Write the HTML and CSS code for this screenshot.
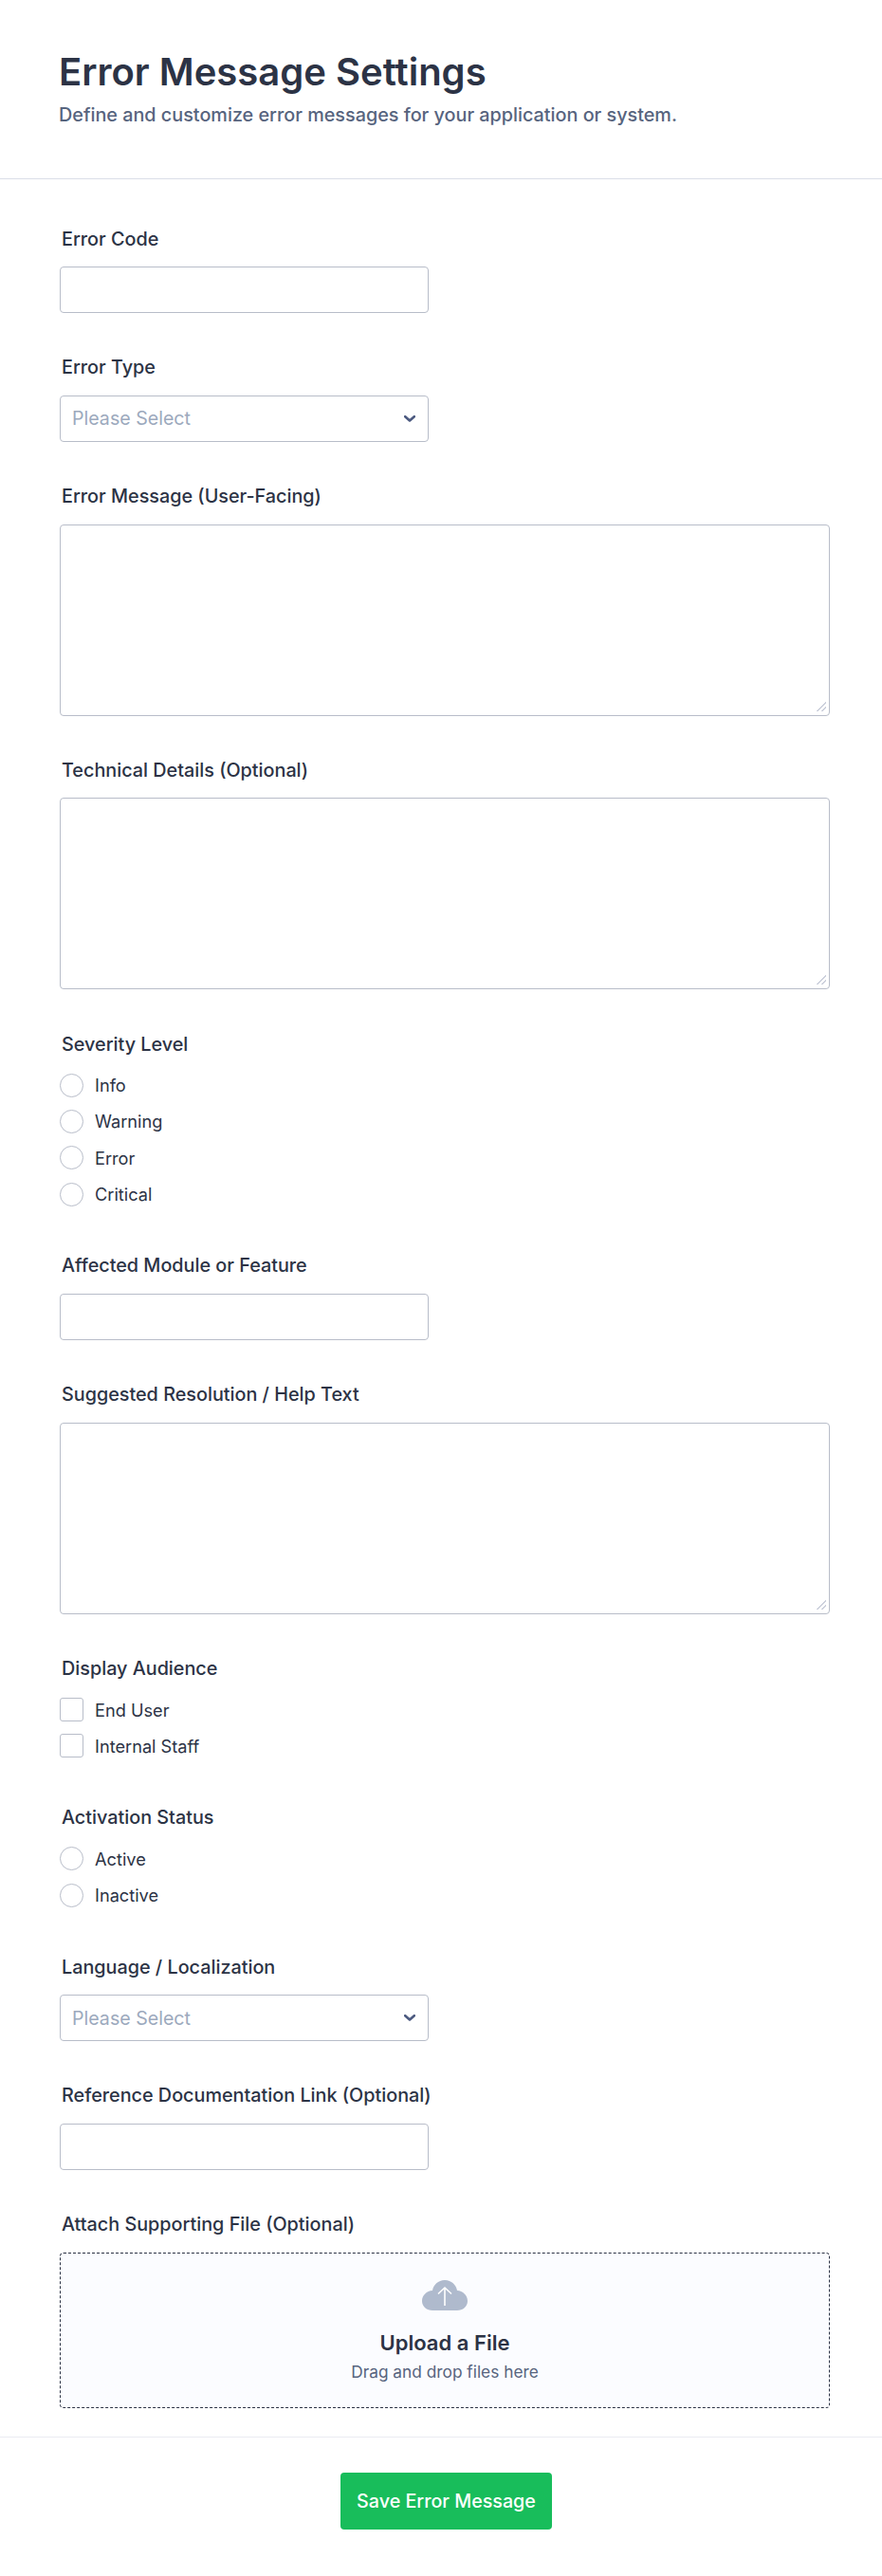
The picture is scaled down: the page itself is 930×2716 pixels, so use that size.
FILE: index.html
```html
<!DOCTYPE html>
<html lang="en">
<head>
	<meta charset="utf-8">
	<meta name="viewport" content="width=device-width">
	<title>Error Message Settings</title>
	<link rel="stylesheet" href="styles.css">
</head>
<body>
	<header class="head">
		<h1>Error Message Settings</h1>
		<p>Define and customize error messages for your application or system.</p>
	</header>
	<form class="form">
		<div class="field">
			<label>Error Code</label>
			<input type="text" class="short">
		</div>
		<div class="field">
			<label>Error Type</label>
			<div class="select-wrap short">
				<select>
					<option>Please Select</option>
				</select>
				<svg class="chevron" viewBox="0 0 12 7"><path d="M1.200 1.200l4.800 4.300 4.800-4.300" fill="none" stroke="#4c5a80" stroke-width="2.600" stroke-linecap="round" stroke-linejoin="round"/></svg>
			</div>
		</div>
		<div class="field">
			<label>Error Message (User-Facing)</label>
			<textarea></textarea>
		</div>
		<div class="field">
			<label>Technical Details (Optional)</label>
			<textarea></textarea>
		</div>
		<div class="field">
			<label>Severity Level</label>
			<div class="options">
				<div class="option"><span class="radio"></span>Info</div>
				<div class="option"><span class="radio"></span>Warning</div>
				<div class="option"><span class="radio"></span>Error</div>
				<div class="option"><span class="radio"></span>Critical</div>
			</div>
		</div>
		<div class="field">
			<label>Affected Module or Feature</label>
			<input type="text" class="short">
		</div>
		<div class="field">
			<label>Suggested Resolution / Help Text</label>
			<textarea></textarea>
		</div>
		<div class="field">
			<label>Display Audience</label>
			<div class="options">
				<div class="option"><span class="check"></span>End User</div>
				<div class="option"><span class="check"></span>Internal Staff</div>
			</div>
		</div>
		<div class="field">
			<label>Activation Status</label>
			<div class="options">
				<div class="option"><span class="radio"></span>Active</div>
				<div class="option"><span class="radio"></span>Inactive</div>
			</div>
		</div>
		<div class="field">
			<label>Language / Localization</label>
			<div class="select-wrap short">
				<select>
					<option>Please Select</option>
				</select>
				<svg class="chevron" viewBox="0 0 12 7"><path d="M1.200 1.200l4.800 4.300 4.800-4.300" fill="none" stroke="#4c5a80" stroke-width="2.600" stroke-linecap="round" stroke-linejoin="round"/></svg>
			</div>
		</div>
		<div class="field">
			<label>Reference Documentation Link (Optional)</label>
			<input type="text" class="short">
		</div>
		<div class="field">
			<label>Attach Supporting File (Optional)</label>
			<div class="upload">
				<svg class="cloud" viewBox="0 0 48 32"><path d="M24 0C31 0 36 5 37 11 43 11.500 48 16 48 22 48 28 43 32 37 32H11C5 32 0 28 0 22 0 16 5 11.500 11 11 12 5 17 0 24 0z" fill="#afbacd"/><path d="M24 27V8M17 14.500 24 8l7 6.500" fill="none" stroke="#fff" stroke-width="1.600"/></svg>
				<strong>Upload a File</strong>
				<span>Drag and drop files here</span>
			</div>
		</div>
	</form>
	<footer class="foot">
		<button type="button">Save Error Message</button>
	</footer>
</body>
</html>
```
FILE: styles.css
```css
* {
	box-sizing: border-box;
}
body {
	margin: 0;
	background: #fff;
	color: #2c3345;
	font-family: Inter, "Liberation Sans", sans-serif;
}
.head {
	padding: 52px 62px 40px;
	border-bottom: 1px solid #dadee8;
	height: 189px;
}
h1 {
	margin: 0;
	font-size: 40px;
	line-height: 48px;
	font-weight: 600;
}
.head p {
	margin: 8px 0 0;
	font-size: 19.8px;
	line-height: 26px;
	font-weight: 500;
	color: #57647e;
}
.form {
	padding: 50.5px 55px 0 63px;
}
.field {
	margin-bottom: 45.25px;
}
.field:last-child {
	margin-bottom: 0;
}
label {
	display: block;
	margin: 0 0 17.5px 2px;
	font-size: 19.8px;
	line-height: 24px;
	font-weight: 500;
}
input,
select,
textarea {
	display: block;
	width: 100%;
	border: 1px solid #b8bdc9;
	border-radius: 4px;
	background: #fff;
	font-family: inherit;
	font-size: 19.6px;
	outline: none;
}
.short {
	width: 389px;
	height: 49px;
}
textarea {
	height: 202px;
}
textarea::-webkit-resizer {
	background: linear-gradient(135deg, transparent 46%, #ccd0dc 46%, #ccd0dc 56%, transparent 56%, transparent 72%, #ccd0dc 72%, #ccd0dc 82%, transparent 82%) 2px 1px / 10px 10px no-repeat;
}
.select-wrap {
	position: relative;
}
select {
	height: 100%;
	padding: 0 12px;
	color: #9ca9bd;
	appearance: none;
}
.chevron {
	position: absolute;
	top: 21px;
	right: 14px;
	width: 12px;
	height: 7px;
}
.options {
	display: flex;
	flex-direction: column;
	margin: -5px 0 -1px;
}
.option {
	display: flex;
	align-items: center;
	gap: 12px;
	height: 38.3px;
	font-size: 18.2px;
	color: #2c3345;
}
.radio,
.check {
	width: 25px;
	height: 25px;
	border: 1px solid #b8bdc9;
	background: #fff;
}
.radio {
	border-radius: 50%;
}
.check {
	border-radius: 3px;
}
.upload {
	display: flex;
	flex-direction: column;
	align-items: center;
	height: 164px;
	padding-top: 28px;
	border: 1px dashed #2c3345;
	border-radius: 4px;
	background: #fbfcff;
}
.cloud {
	width: 48px;
	height: 32px;
}
.upload strong {
	margin-top: 20px;
	font-size: 22px;
	line-height: 28px;
	font-weight: 600;
}
.upload span {
	margin-top: 5px;
	font-size: 17.3px;
	line-height: 24px;
	color: #57647e;
}
.foot {
	display: flex;
	justify-content: center;
	height: 147px;
	margin-top: 30px;
	padding: 37px 0 0 11px;
	border-top: 1px solid #eaebf2;
}
.foot button {
	width: 223px;
	height: 60px;
	border: 0;
	border-radius: 4px;
	background: #18bd5b;
	color: #fff;
	font-family: inherit;
	font-size: 19.7px;
	font-weight: 500;
}
```
